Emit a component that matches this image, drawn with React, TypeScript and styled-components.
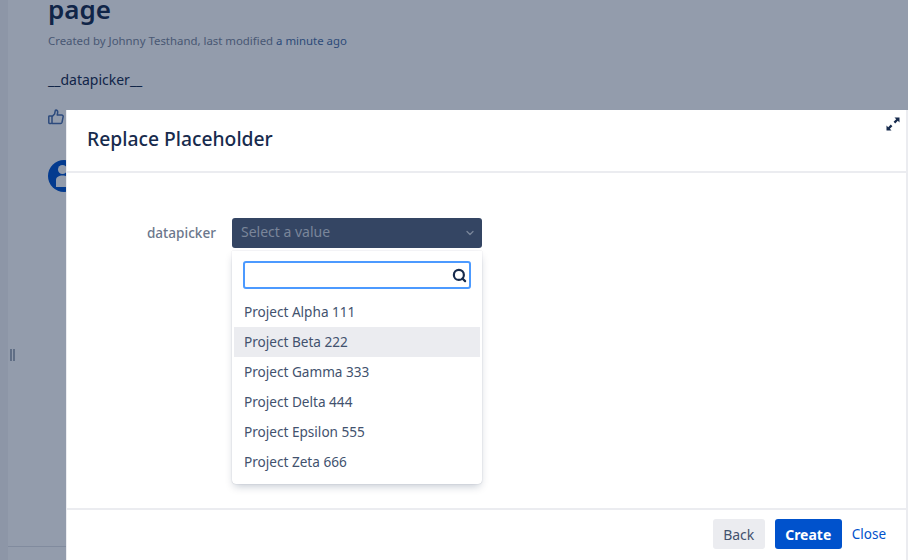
import React from 'react';
import styled, {createGlobalStyle} from 'styled-components';
import {Search, ChevronDown} from 'lucide-react';

const font = `"Noto Sans", "Open Sans", sans-serif`;

const GlobalStyle = createGlobalStyle`
  html, body {
    margin: 0;
    width: 908px;
    height: 560px;
    overflow: hidden;
    background: #fff;
    font-family: ${font};
  }
  * { box-sizing: border-box; }
`;

const PROJECTS = [
    'Project Alpha 111',
    'Project Beta 222',
    'Project Gamma 333',
    'Project Delta 444',
    'Project Epsilon 555',
    'Project Zeta 666',
];

const App = () => {
    return (
        <>
            <GlobalStyle/>
            <Page>
                <Sidebar/>
                <ResizeHandle/>
                <Main>
                    <Title>page</Title>
                    <Byline>
                        Created by Johnny Testhand, last modified <BylineLink>a minute ago</BylineLink>
                    </Byline>
                    <Body>__datapicker__</Body>
                    <LikeRow>
                        <svg width="16" height="16" viewBox="0 0 16 16" fill="none" stroke="currentColor" strokeWidth="1.5" strokeLinejoin="round">
                            <rect x="0.8" y="7" width="3.2" height="7.4" rx="0.6"/>
                            <path d="M4 7.6 L6.6 5 L7.4 1.2 C9.2 0.8 10 2.2 9.6 4 L9.2 6 L13.6 6 C14.8 6 15.4 7 15.1 7.9 L14 13.4 C13.8 14.2 13.2 14.4 12.6 14.4 L4 14.4"/>
                        </svg>
                    </LikeRow>
                    <Avatar>
                        <svg width="32" height="32" viewBox="0 0 32 32" fill="#fff">
                            <circle cx="14.5" cy="9.5" r="4.5"/>
                            <path d="M8 27 L8 20 C8 17 11 15.5 14.5 15.5 C18 15.5 21 17 21 20 L21 27 Z"/>
                        </svg>
                    </Avatar>
                </Main>
                <FooterLine/>
                <Blanket/>
                <Dialog>
                    <DialogHeader>
                        <DialogTitle>Replace Placeholder</DialogTitle>
                        <ExpandButton>
                            <svg width="16" height="16" viewBox="0 0 16 16" fill="#172b4d">
                                <path d="M9.5 1.5 H14.5 V6.5 L12.8 4.8 L10.2 7.4 L8.6 5.8 L11.2 3.2 Z"/>
                                <path d="M6.5 14.5 H1.5 V9.5 L3.2 11.2 L5.8 8.6 L7.4 10.2 L4.8 12.8 Z"/>
                            </svg>
                        </ExpandButton>
                    </DialogHeader>
                    <DialogBody>
                        <FieldLabel>datapicker</FieldLabel>
                        <Picker>
                            <Select>
                                <Placeholder>Select a value</Placeholder>
                                <ChevronDown size={12} strokeWidth={2.5} color="#7a869a"/>
                            </Select>
                            <Dropdown>
                                <SearchBox>
                                    <Search size={15} strokeWidth={3.5} color="#172b4d"/>
                                </SearchBox>
                                <Options>
                                    {PROJECTS.map(p => (
                                        <Option key={p} $active={p === 'Project Beta 222'}>{p}</Option>
                                    ))}
                                </Options>
                            </Dropdown>
                        </Picker>
                    </DialogBody>
                    <DialogFooter>
                        <BackButton>Back</BackButton>
                        <CreateButton>Create</CreateButton>
                        <CloseLink>Close</CloseLink>
                    </DialogFooter>
                </Dialog>
            </Page>
        </>
    );
};

export default App;

const Page = styled.div`
  position: relative;
  width: 908px;
  height: 560px;
  overflow: hidden;
  display: flex;
  background: #fff;`

const Sidebar = styled.div`
  width: 8px;
  flex-shrink: 0;
  background: #f4f5f7;`

const ResizeHandle = styled.div`
  position: absolute;
  left: 10px;
  top: 349px;
  width: 5px;
  height: 12px;
  border-left: 2px solid #a5adba;
  border-right: 2px solid #a5adba;`

const Main = styled.div`
  flex: 1;
  padding: 0 0 0 40px;
  color: #172b4d;
  margin-top: -13px;`

const Title = styled.h1`
  margin: 0;
  font-size: 26px;
  line-height: 44px;
  font-weight: 600;
  color: #172b4d;`

const Byline = styled.div`
  margin-top: 2px;
  font-size: 11.4px;
  line-height: 16px;
  color: #7a869a;`

const BylineLink = styled.span`
  color: #4a6fa5;`

const Body = styled.div`
  margin-top: 21px;
  font-size: 14px;
  line-height: 20px;
  color: #172b4d;`

const LikeRow = styled.div`
  margin-top: 19px;
  height: 16px;
  color: #496eab;
  display: flex;`

const Avatar = styled.div`
  margin-top: 35px;
  width: 32px;
  height: 32px;
  border-radius: 50%;
  background: #0052cc;
  overflow: hidden;
  display: flex;
  align-items: center;
  justify-content: center;`

const FooterLine = styled.div`
  position: absolute;
  left: 8px;
  right: 0;
  top: 546px;
  height: 1px;
  background: #dfe1e6;`

const Blanket = styled.div`
  position: absolute;
  inset: 0;
  background: rgba(9, 30, 66, 0.44);`

const Dialog = styled.div`
  position: absolute;
  left: 66px;
  top: 110px;
  width: 842px;
  height: 470px;
  background: #fff;
  border-left: 1px solid #ebecf0;
  border-right: 2px solid #ebecf0;
  display: flex;
  flex-direction: column;`

const DialogHeader = styled.div`
  position: relative;
  height: 63px;
  flex-shrink: 0;
  padding: 0 20px 4px;
  display: flex;
  align-items: center;
  border-bottom: 2px solid #ebecf0;`

const DialogTitle = styled.h2`
  margin: 0;
  font-size: 19.3px;
  font-weight: 500;
  color: #172b4d;`

const ExpandButton = styled.div`
  position: absolute;
  top: 6px;
  right: 5px;
  width: 16px;
  height: 16px;
  display: flex;`

const DialogBody = styled.div`
  height: 335px;
  flex-shrink: 0;
  padding: 45px 0 0 0;
  display: flex;
  align-items: flex-start;`

const FieldLabel = styled.label`
  width: 149px;
  padding-top: 5px;
  text-align: right;
  font-size: 13.6px;
  line-height: 20px;
  font-weight: 500;
  color: #6b778c;`

const Picker = styled.div`
  margin-left: 16px;
  width: 250px;`

const Select = styled.div`
  height: 30px;
  border-radius: 3px;
  background: #344563;
  padding: 0 6px 0 9px;
  display: flex;
  align-items: center;
  justify-content: space-between;`

const Placeholder = styled.span`
  font-size: 14px;
  line-height: 20px;
  color: #7a869a;
  margin-top: -2px;`

const Dropdown = styled.div`
  margin-top: 3px;
  height: 233px;
  padding: 10px 2px 0;
  background: #fff;
  border-radius: 0 0 4px 4px;
  box-shadow: 0 4px 8px -2px rgba(9, 30, 66, 0.25), 0 0 1px rgba(9, 30, 66, 0.31);`

const SearchBox = styled.div`
  margin: 0 9px 0 9px;
  height: 28px;
  border: 2px solid #4c9aff;
  border-radius: 3px;
  background: #fff;
  padding-right: 2px;
  display: flex;
  align-items: center;
  justify-content: flex-end;`

const Options = styled.div`
  margin-top: 8px;`

const Option = styled.div<{$active?: boolean}>`
  height: 30px;
  padding: 0 10px 0 10px;
  font-size: 13.6px;
  line-height: 30px;
  color: #42526e;
  background: ${props => props.$active ? '#ebecf0' : 'transparent'};`

const DialogFooter = styled.div`
  flex: 1;
  padding: 9px 20px 0 0;
  display: flex;
  align-items: flex-start;
  justify-content: flex-end;
  border-top: 2px solid #ebecf0;`

const BackButton = styled.button`
  height: 30px;
  width: 52px;
  border: none;
  border-radius: 3px;
  background: #ebecf0;
  color: #42526e;
  font-family: ${font};
  font-size: 14px;
  padding: 0;`

const CreateButton = styled.button`
  margin-left: 10px;
  height: 30px;
  width: 67px;
  border: none;
  border-radius: 3px;
  background: #0052cc;
  color: #fff;
  font-family: ${font};
  font-size: 14px;
  font-weight: 700;
  padding: 0;`

const CloseLink = styled.a`
  margin-left: 10px;
  line-height: 30px;
  font-size: 13.5px;
  color: #0052cc;`
